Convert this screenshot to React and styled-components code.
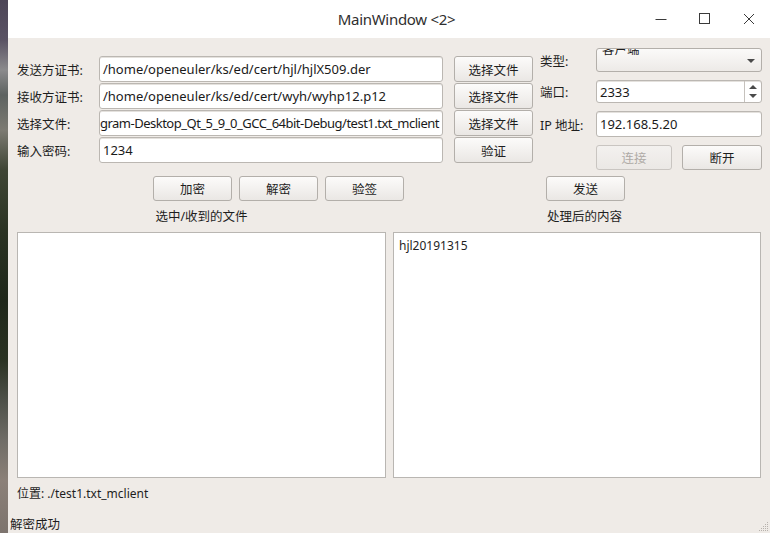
import React from 'react';
import styled, { createGlobalStyle } from 'styled-components';

const GlobalStyle = createGlobalStyle`
  html, body {
    margin: 0;
    padding: 0;
  }
  body {
    font-family: "Noto Sans", "Noto Sans CJK SC", sans-serif;
    font-size: 12px;
    color: #1e1e1e;
    overflow: hidden;
  }
`;

const Screen = styled.div`
  display: flex;
  width: 770px;
  height: 533px;
`;

const DesktopStrip = styled.div`
  width: 8px;
  flex: none;
  background: linear-gradient(
    180deg,
    #4d4657 0px,
    #5a5364 40px,
    #8b8a8c 70px,
    #5d6260 95px,
    #7c7a72 130px,
    #3f4535 170px,
    #2b3323 230px,
    #1f271a 300px,
    #2a3222 360px,
    #4d5048 400px,
    #6f6c66 440px,
    #8b8078 480px,
    #7d746e 533px
  );
`;

const Window = styled.div`
  flex: 1;
  display: flex;
  flex-direction: column;
  background: #efebe7;
`;

const TitleBar = styled.div`
  height: 38px;
  flex: none;
  display: grid;
  grid-template-columns: 1fr auto 1fr;
  align-items: center;
  background: #ffffff;
`;

const Title = styled.div`
  grid-column: 2;
  margin-left: 15px;
  font-size: 15px;
  letter-spacing: -0.3px;
  color: #2f2f2f;
`;

const Controls = styled.div`
  grid-column: 3;
  justify-self: end;
  display: flex;
  align-items: center;
  gap: 32px;
  padding-right: 15px;

  svg {
    display: block;
  }
`;

const Body = styled.div`
  flex: 1;
  display: flex;
  flex-direction: column;
  padding-left: 9px;
`;

const TopSection = styled.div`
  display: flex;
  align-items: flex-start;
`;

const LeftForm = styled.div`
  margin-top: 18px;
  display: grid;
  grid-template-columns: 71px 344px 79px;
  grid-auto-rows: 26px;
  column-gap: 11px;
  row-gap: 1px;
  align-items: center;
`;

const RightForm = styled.div`
  margin-top: 10px;
  margin-left: 7px;
  display: grid;
  grid-template-columns: 56px 166px;
  grid-template-rows: 24px 23px 26px 25px;
  row-gap: 8px;
  align-items: center;
`;

const Label = styled.label`
  white-space: nowrap;
  font-size: 12.5px;
  color: #1e1e1e;
`;

const LineEdit = styled.div`
  box-sizing: border-box;
  height: ${(p) => p.$h || 26}px;
  display: flex;
  align-items: center;
  justify-content: ${(p) => (p.$end ? 'flex-end' : 'flex-start')};
  padding: 0 3px;
  font-size: 13px;
  letter-spacing: ${(p) => (p.$tight ? '-0.5px' : 'normal')};
  background: #ffffff;
  border: 1px solid #bbb7b2;
  border-radius: 3px;
  box-shadow: inset 0 1px 0 #e4e1dd;
  white-space: nowrap;
  overflow: hidden;
  color: #1a1a1a;
`;

const Button = styled.button`
  box-sizing: border-box;
  height: ${(p) => p.$h || 26}px;
  width: ${(p) => (p.$w ? `${p.$w}px` : '100%')};
  padding: 0;
  font: inherit;
  font-size: 12.5px;
  color: ${(p) => (p.disabled ? '#aeaaa6' : '#1e1e1e')};
  background: ${(p) =>
    p.disabled
      ? 'linear-gradient(#f3f1ef, #ebe8e5)'
      : 'linear-gradient(#fcfbfa, #eae7e4)'};
  border: 1px solid ${(p) => (p.disabled ? '#c9c5c1' : '#b3afaa')};
  border-radius: 3px;
`;

const Combo = styled.div`
  box-sizing: border-box;
  height: 24px;
  position: relative;
  overflow: hidden;
  padding-left: 5px;
  font-size: 12.5px;
  background: linear-gradient(#fbfaf9, #edeae7);
  border: 1px solid #b3afaa;
  border-radius: 3px;
`;

const ComboText = styled.span`
  display: block;
  line-height: 16px;
  margin-top: -7px;
`;

const ComboArrow = styled.span`
  position: absolute;
  right: 6px;
  top: 10px;
  width: 0;
  height: 0;
  border-left: 4px solid transparent;
  border-right: 4px solid transparent;
  border-top: 4px solid #4a4a4a;
`;

const Spin = styled(LineEdit)`
  padding-right: 0;
  justify-content: space-between;
`;

const SpinArrows = styled.div`
  align-self: stretch;
  width: 16px;
  display: flex;
  flex-direction: column;
  align-items: center;
  justify-content: center;
  gap: 5px;
  border-left: 1px solid #c6c2bd;
`;

const Tri = styled.span`
  width: 0;
  height: 0;
  border-left: 4px solid transparent;
  border-right: 4px solid transparent;
  ${(p) =>
    p.$up
      ? 'border-bottom: 4px solid #4a4a4a;'
      : 'border-top: 4px solid #4a4a4a;'}
`;

const ButtonPair = styled.div`
  grid-column: 2;
  display: flex;
  gap: 10px;
`;

const ActionRow = styled.div`
  margin-top: 6px;
  display: flex;
  gap: 7px;
  padding-left: 136px;
`;

const SendGap = styled.div`
  width: 128px;
`;

const Panels = styled.div`
  margin-top: 8px;
  display: grid;
  grid-template-columns: 369px 368px;
  column-gap: 7px;
  row-gap: 7px;
`;

const Caption = styled.div`
  line-height: 16px;
  font-size: 12.5px;
  text-align: center;
  padding-left: ${(p) => p.$shift || 0}px;
`;

const TextBox = styled.div`
  box-sizing: border-box;
  height: 246px;
  padding: 5px 5px;
  background: #ffffff;
  border: 1px solid #b9b6b2;
  line-height: 16px;
`;

const PathLine = styled.div`
  margin-top: 8px;
  line-height: 16px;
`;

const StatusBar = styled.div`
  margin-top: auto;
  height: 20px;
  display: flex;
  align-items: center;
  justify-content: space-between;
  padding-left: 2px;
  margin-left: -9px;
  font-size: 12.5px;
`;

const Grip = styled.svg`
  align-self: flex-end;
  display: block;
`;

const gripDots = [
  [10, 2],
  [8, 4],
  [10, 4],
  [6, 6],
  [8, 6],
  [10, 6],
  [4, 8],
  [6, 8],
  [8, 8],
  [10, 8],
  [2, 10],
  [4, 10],
  [6, 10],
  [8, 10],
  [10, 10],
];

export default function App() {
  return (
    <>
      <GlobalStyle />
      <Screen>
        <DesktopStrip />
        <Window>
          <TitleBar>
            <Title>MainWindow &lt;2&gt;</Title>
            <Controls>
              <svg width="12" height="12" viewBox="0 0 12 12">
                <line x1="0.5" y1="6.5" x2="11.5" y2="6.5" stroke="#3a3a3a" strokeWidth="1" />
              </svg>
              <svg width="12" height="12" viewBox="0 0 12 12">
                <rect x="0.5" y="0.5" width="10" height="10" fill="none" stroke="#3a3a3a" strokeWidth="1" />
              </svg>
              <svg width="12" height="12" viewBox="0 0 12 12">
                <path d="M1 1 L11 11 M11 1 L1 11" stroke="#3a3a3a" strokeWidth="1" />
              </svg>
            </Controls>
          </TitleBar>

          <Body>
            <TopSection>
              <LeftForm>
                <Label>发送方证书:</Label>
                <LineEdit>/home/openeuler/ks/ed/cert/hjl/hjlX509.der</LineEdit>
                <Button>选择文件</Button>

                <Label>接收方证书:</Label>
                <LineEdit>/home/openeuler/ks/ed/cert/wyh/wyhp12.p12</LineEdit>
                <Button>选择文件</Button>

                <Label>选择文件:</Label>
                <LineEdit $end $tight>gram-Desktop_Qt_5_9_0_GCC_64bit-Debug/test1.txt_mclient</LineEdit>
                <Button>选择文件</Button>

                <Label>输入密码:</Label>
                <LineEdit>1234</LineEdit>
                <Button>验证</Button>
              </LeftForm>

              <RightForm>
                <Label>类型:</Label>
                <Combo>
                  <ComboText>客户端</ComboText>
                  <ComboArrow />
                </Combo>

                <Label>端口:</Label>
                <Spin $h={23}>
                  <span>2333</span>
                  <SpinArrows>
                    <Tri $up />
                    <Tri />
                  </SpinArrows>
                </Spin>

                <Label>IP 地址:</Label>
                <LineEdit>192.168.5.20</LineEdit>

                <ButtonPair>
                  <Button $w={76} $h={25} disabled>
                    连接
                  </Button>
                  <Button $w={80} $h={25}>
                    断开
                  </Button>
                </ButtonPair>
              </RightForm>
            </TopSection>

            <ActionRow>
              <Button $w={79} $h={25}>加密</Button>
              <Button $w={79} $h={25}>解密</Button>
              <Button $w={79} $h={25}>验签</Button>
              <SendGap />
              <Button $w={79} $h={25}>发送</Button>
            </ActionRow>

            <Panels>
              <Caption>选中/收到的文件</Caption>
              <Caption $shift={15}>处理后的内容</Caption>
              <TextBox />
              <TextBox>hjl20191315</TextBox>
            </Panels>

            <PathLine>位置: ./test1.txt_mclient</PathLine>

            <StatusBar>
              <span>解密成功</span>
              <Grip width="12" height="12" viewBox="0 0 12 12">
                {gripDots.map(([x, y]) => (
                  <rect key={`${x}-${y}`} x={x - 1} y={y - 1} width="1" height="1" fill="#b7b2ad" />
                ))}
              </Grip>
            </StatusBar>
          </Body>
        </Window>
      </Screen>
    </>
  );
}
